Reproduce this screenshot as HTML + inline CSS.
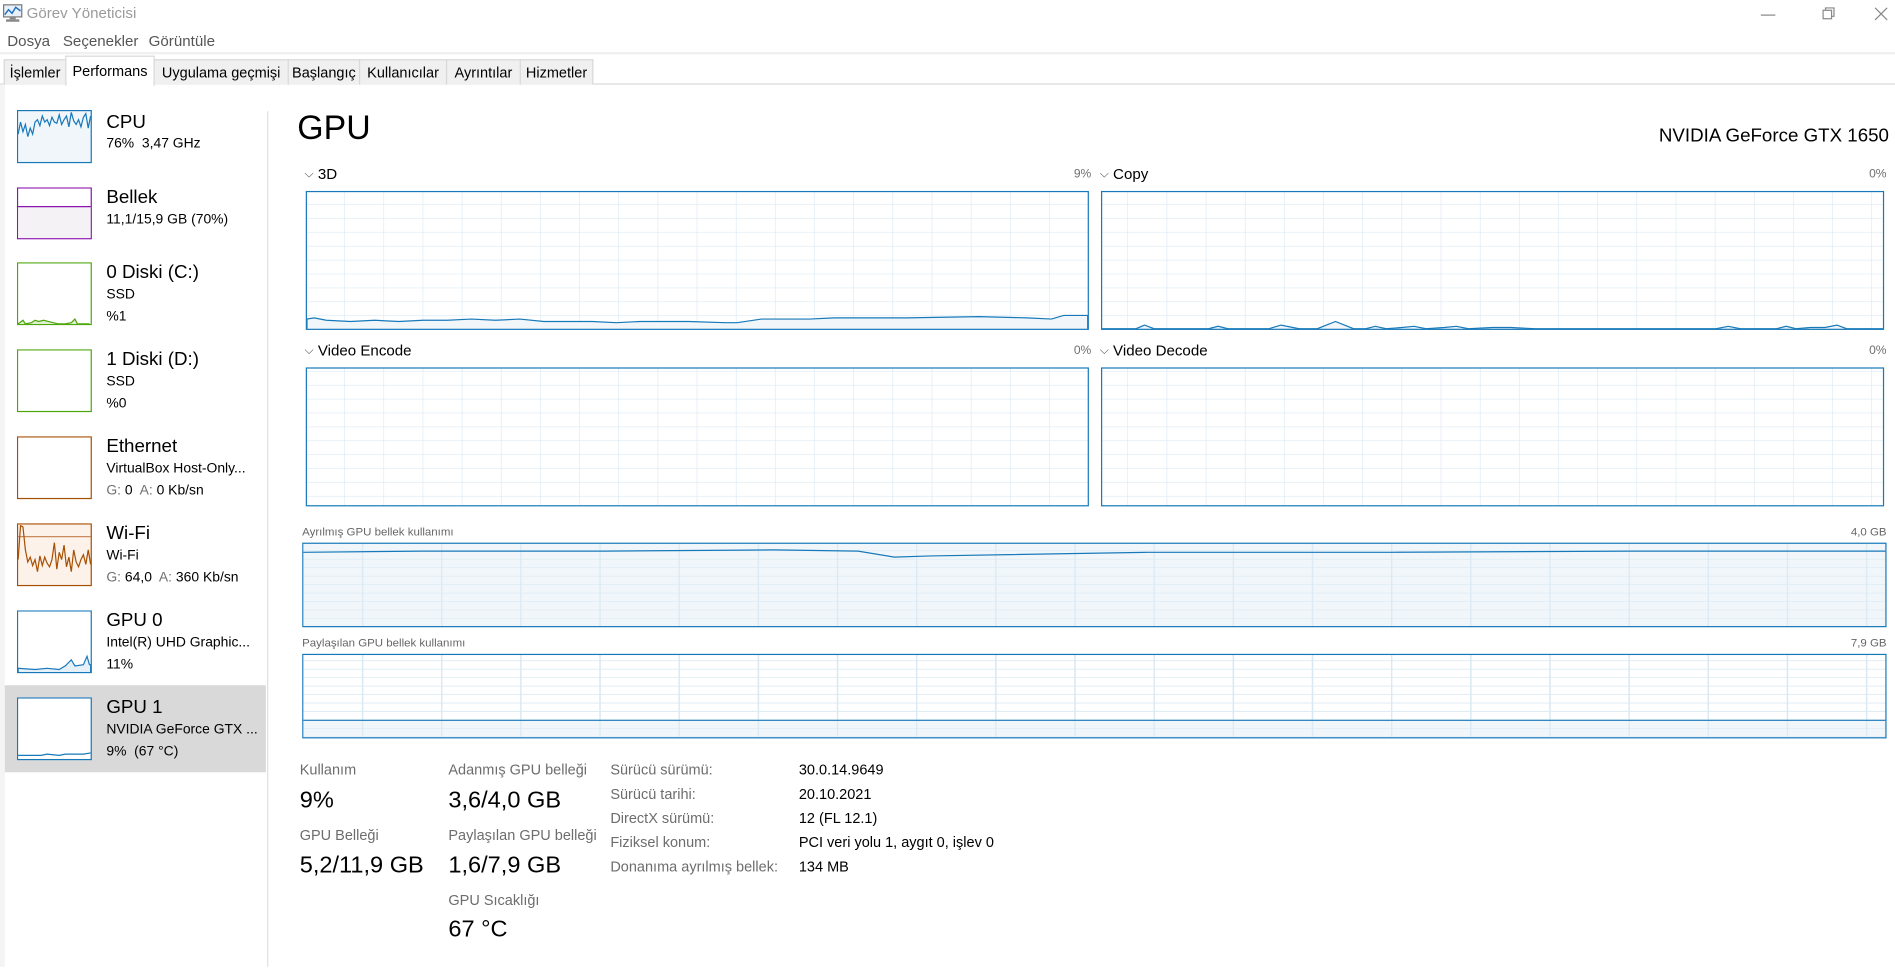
<!DOCTYPE html>
<html><head><meta charset="utf-8"><style>
html,body{margin:0;padding:0;width:1895px;height:966px;overflow:hidden;background:#fff}
#w{position:absolute;left:0;top:0;width:1568px;height:800px;transform:scale(1.20855);transform-origin:0 0;font-family:"Liberation Sans",sans-serif;color:#000}
.a{position:absolute;white-space:nowrap}
.tab{position:absolute;top:49px;height:20px;background:#f0f0f0;border:1px solid #d9d9d9;border-bottom:none;font-size:12px;line-height:21px;text-align:center;color:#000}
.th{position:absolute;left:15px;width:60px;height:47px;background:#fff}
.t1{position:absolute;left:88px;font-size:15.5px}
.t2{position:absolute;left:88px;font-size:11.5px;color:#000}
.g{color:#707070}
.lbl{font-size:12px;color:#6d6d6d}
.val{font-size:19.5px}
</style></head><body><div id="w">
<!-- title bar -->
<svg class="a" style="left:2px;top:3px" width="17" height="16" viewBox="0 0 17 16"><rect x="1" y="1" width="15" height="10" fill="#e8f1fa" stroke="#777"/><polyline points="2,9 5,5 8,8 11,3 15,6" fill="none" stroke="#1d6fbf" stroke-width="1.2"/><rect x="6" y="11" width="5" height="2" fill="#888"/><rect x="3" y="13" width="11" height="2" fill="#888"/></svg>
<div class="a" style="left:22px;top:4px;font-size:12.5px;color:#9a9a9a">Görev Yöneticisi</div>
<div class="a" style="left:1457px;top:12px;width:12px;height:1px;background:#888"></div>
<svg class="a" style="left:1508px;top:6px" width="11" height="11"><rect x="0.5" y="2.5" width="7" height="7" fill="#fff" stroke="#888"/><polyline points="2.5,2.5 2.5,0.5 9.5,0.5 9.5,7.5 7.5,7.5" fill="none" stroke="#888"/></svg>
<svg class="a" style="left:1551px;top:6px" width="11" height="11"><path d="M0.5 0.5L10.5 10.5M10.5 0.5L0.5 10.5" stroke="#888"/></svg>
<!-- menu -->
<div class="a" style="left:6px;top:27px;font-size:12.5px;color:#555">Dosya</div>
<div class="a" style="left:52px;top:27px;font-size:12.5px;color:#555">Seçenekler</div>
<div class="a" style="left:123px;top:27px;font-size:12.5px;color:#555">Görüntüle</div>
<div class="a" style="left:0;top:43px;width:1568px;height:2px;background:#f0f0f0"></div>
<!-- tabs -->
<div class="a" style="left:0;top:69px;width:1568px;height:1px;background:#d9d9d9"></div>
<div class="tab" style="left:3px;width:50px">İşlemler</div>
<div class="tab" style="left:54px;width:72px;top:46px;height:24px;background:#fff;line-height:24px">Performans</div>
<div class="tab" style="left:127px;width:110px">Uygulama geçmişi</div>
<div class="tab" style="left:238px;width:58px">Başlangıç</div>
<div class="tab" style="left:297px;width:71px">Kullanıcılar</div>
<div class="tab" style="left:369px;width:60px">Ayrıntılar</div>
<div class="tab" style="left:430px;width:59px">Hizmetler</div>
<div class="a" style="left:0;top:70px;width:4px;height:730px;background:#f4f4f4"></div>
<!-- sidebar -->
<div class="a" style="left:221px;top:92px;width:1px;height:708px;background:#e0e0e0"></div>
<div class="a" style="left:4px;top:567px;width:216px;height:72px;background:#d9d9d9"></div>

<svg class="a" style="left:14px;top:91px" width="63" height="45"><rect x="0.5" y="0.5" width="61" height="43" fill="#f1f6fa" stroke="#1779ba"/><polyline points="1,20 3,10 5,18 7,12 9,22 11,15 13,20 15,10 17,8 19,13 21,5 23,10 25,8 27,13 29,6 31,10 33,11 35,4 37,12 39,8 41,5 43,14 45,2 47,9 49,12 51,8 53,14 55,6 57,3 59,15 61,5" fill="none" stroke="#1779ba"/></svg>
<div class="t1" style="top:93px">CPU</div><div class="t2" style="top:113px">76%&nbsp; 3,47 GHz</div>

<svg class="a" style="left:14px;top:155px" width="63" height="44"><rect x="0.5" y="0.5" width="61" height="42" fill="#fff" stroke="#8b12ae"/><rect x="1" y="16" width="60" height="26" fill="#f4f2f4"/><line x1="1" y1="16" x2="61" y2="16" stroke="#8b12ae"/></svg>
<div class="t1" style="top:155px">Bellek</div><div class="t2" style="top:176px">11,1/15,9 GB (70%)</div>

<svg class="a" style="left:14px;top:217px" width="63" height="53"><rect x="0.5" y="0.5" width="61" height="51" fill="#fff" stroke="#4da60c"/><polyline points="1,51 5,48 7,51 12,50 15,48 18,49 22,48 26,49 30,50 34,51 40,51 45,50 48,47 50,51 60,51" fill="#dff0d0" stroke="#4da60c"/></svg>
<div class="t1" style="top:217px">0 Diski (C:)</div><div class="t2" style="top:238px">SSD</div><div class="t2" style="top:256px">%1</div>

<svg class="a" style="left:14px;top:289px" width="63" height="53"><rect x="0.5" y="0.5" width="61" height="51" fill="#fff" stroke="#4da60c"/></svg>
<div class="t1" style="top:289px">1 Diski (D:)</div><div class="t2" style="top:310px">SSD</div><div class="t2" style="top:328px">%0</div>

<svg class="a" style="left:14px;top:361px" width="63" height="53"><rect x="0.5" y="0.5" width="61" height="51" fill="#fff" stroke="#a74f01"/></svg>
<div class="t1" style="top:361px">Ethernet</div><div class="t2" style="top:382px">VirtualBox Host-Only...</div><div class="t2" style="top:400px"><span class="g">G:</span> 0&nbsp; <span class="g">A:</span> 0 Kb/sn</div>

<svg class="a" style="left:14px;top:433px" width="63" height="53"><rect x="0.5" y="0.5" width="61" height="51" fill="#fdf2ea" stroke="#a74f01"/><line x1="1" y1="11" x2="61" y2="11" stroke="#c98a5e"/><polyline points="1,30 3,2 5,3 7,22 9,32 11,28 13,35 15,30 17,40 19,27 21,35 23,28 25,33 27,36 29,30 31,16 33,38 35,24 37,30 39,18 41,36 43,28 45,40 47,22 49,32 51,36 53,30 55,26 57,34 59,22 61,34" fill="none" stroke="#a74f01"/></svg>
<div class="t1" style="top:433px">Wi-Fi</div><div class="t2" style="top:454px">Wi-Fi</div><div class="t2" style="top:472px"><span class="g">G:</span> 64,0&nbsp; <span class="g">A:</span> 360 Kb/sn</div>

<svg class="a" style="left:14px;top:505px" width="63" height="53"><rect x="0.5" y="0.5" width="61" height="51" fill="#fff" stroke="#1779ba"/><polyline points="1,51 1,48 15,49 25,48 35,49 40,46 45,41 48,46 55,45 58,38 60,45 61,45 61,51" fill="#e6f0f8" stroke="#1779ba"/></svg>
<div class="t1" style="top:505px">GPU 0</div><div class="t2" style="top:526px">Intel(R) UHD Graphic...</div><div class="t2" style="top:544px">11%</div>

<svg class="a" style="left:14px;top:577px" width="63" height="53"><rect x="0.5" y="0.5" width="61" height="51" fill="#fff" stroke="#1779ba"/><polyline points="1,48 20,48 25,47 35,48 40,47 55,47 61,46" fill="none" stroke="#1779ba"/></svg>
<div class="t1" style="top:577px">GPU 1</div><div class="t2" style="top:598px">NVIDIA GeForce GTX ...</div><div class="t2" style="top:616px">9%&nbsp; (67 °C)</div>

<!-- main -->
<div class="a" style="left:246px;top:90px;font-size:28px">GPU</div>
<div class="a" style="right:5px;top:104px;font-size:15.5px">NVIDIA GeForce GTX 1650</div>

<svg class="a" style="left:250px;top:130px" width="1315" height="680">
<defs>
<pattern id="gp" x="3" y="28" width="32.4" height="11.5" patternUnits="userSpaceOnUse"><path d="M32.4 0V11.5M0 11.5H32.4" fill="none" stroke="#d9e9f3" stroke-width="1"/></pattern>
<pattern id="mp" x="0" y="319" width="65.5" height="7" patternUnits="userSpaceOnUse"><path d="M50 0V7" fill="none" stroke="#d9e9f3"/><path d="M0 7H65.5" fill="none" stroke="#d9e9f3"/></pattern>
</defs>
<g font-family="Liberation Sans" font-size="12.5">
<text x="2" y="17" font-size="10" fill="#555">⌵</text><text x="13" y="18">3D</text><text x="653" y="17" font-size="10" fill="#707070" text-anchor="end">9%</text>
<text x="660" y="17" font-size="10" fill="#555">⌵</text><text x="671" y="18">Copy</text><text x="1311" y="17" font-size="10" fill="#707070" text-anchor="end">0%</text>
<text x="2" y="163" font-size="10" fill="#555">⌵</text><text x="13" y="164">Video Encode</text><text x="653" y="163" font-size="10" fill="#707070" text-anchor="end">0%</text>
<text x="660" y="163" font-size="10" fill="#555">⌵</text><text x="671" y="164">Video Decode</text><text x="1311" y="163" font-size="10" fill="#707070" text-anchor="end">0%</text>
<text x="0" y="313" font-size="9.5" fill="#666">Ayrılmış GPU bellek kullanımı</text><text x="1311" y="313" font-size="9.5" fill="#666" text-anchor="end">4,0 GB</text>
<text x="0" y="405" font-size="9.5" fill="#666">Paylaşılan GPU bellek kullanımı</text><text x="1311" y="405" font-size="9.5" fill="#666" text-anchor="end">7,9 GB</text>
</g>
<!-- 3D -->
<rect x="3.5" y="28.5" width="647" height="114" fill="url(#gp)"/>
<polyline points="4,142 4,134 10,133 20,135 40,136 60,135 80,136 100,135 120,135 140,134 160,135 180,134 200,136 240,136 260,137 280,136 320,136 350,137 360,137 380,134 420,134 440,133 500,133 560,132 600,133 620,134 630,131 650,131 650,142" fill="#f1f6fa" stroke="#1779ba"/>
<rect x="3.5" y="28.5" width="647" height="114" fill="none" stroke="#1779ba"/>
<!-- Copy -->
<rect x="661.5" y="28.5" width="647" height="114" fill="url(#gp)"/>
<polyline points="662,142 690,142 697,139 705,142 750,142 758,140 766,142 800,142 810,139 825,142 840,142 855,136 870,142 880,142 888,140 897,142 910,141 920,140 930,142 945,141 955,140 965,142 985,141 1000,141 1020,142 1170,142 1180,140 1190,142 1220,142 1228,140 1236,142 1248,141 1260,141 1270,139 1278,142 1308,142" fill="#f1f6fa" stroke="#1779ba"/>
<rect x="661.5" y="28.5" width="647" height="114" fill="none" stroke="#1779ba"/>
<!-- Encode / Decode -->
<rect x="3.5" y="174.5" width="647" height="114" fill="url(#gp)" transform="translate(0,0)"/>
<rect x="3.5" y="174.5" width="647" height="114" fill="none" stroke="#1779ba"/>
<rect x="661.5" y="174.5" width="647" height="114" fill="url(#gp)"/>
<rect x="661.5" y="174.5" width="647" height="114" fill="none" stroke="#1779ba"/>
<!-- dedicated -->
<rect x="0.5" y="319.5" width="1310" height="69" fill="#f1f6fa"/>
<rect x="0.5" y="319.5" width="1310" height="69" fill="url(#mp)"/>
<polyline points="1,327 100,326 250,326 390,325 460,326 490,331 520,330 700,327 900,327 1100,326 1240,326 1310,326" fill="none" stroke="#1779ba"/>
<rect x="0.5" y="319.5" width="1310" height="69" fill="none" stroke="#1779ba"/>
<!-- shared -->
<rect x="0.5" y="411.5" width="1310" height="69" fill="url(#mp)"/>
<rect x="1" y="466" width="1309" height="14" fill="#f1f6fa"/>
<rect x="0.5" y="411.5" width="1310" height="69" fill="url(#mp)"/>
<line x1="1" y1="466" x2="1310" y2="466" stroke="#1779ba"/>
<rect x="0.5" y="411.5" width="1310" height="69" fill="none" stroke="#1779ba"/>
</svg>

<!-- stats -->
<div class="a lbl" style="left:248px;top:630px">Kullanım</div>
<div class="a val" style="left:248px;top:651px">9%</div>
<div class="a lbl" style="left:248px;top:684px">GPU Belleği</div>
<div class="a val" style="left:248px;top:705px">5,2/11,9 GB</div>
<div class="a lbl" style="left:371px;top:630px">Adanmış GPU belleği</div>
<div class="a val" style="left:371px;top:651px">3,6/4,0 GB</div>
<div class="a lbl" style="left:371px;top:684px">Paylaşılan GPU belleği</div>
<div class="a val" style="left:371px;top:705px">1,6/7,9 GB</div>
<div class="a lbl" style="left:371px;top:738px">GPU Sıcaklığı</div>
<div class="a val" style="left:371px;top:758px">67 °C</div>
<div class="a lbl" style="left:505px;top:630px">Sürücü sürümü:</div><div class="a" style="left:661px;top:630px;font-size:12px">30.0.14.9649</div>
<div class="a lbl" style="left:505px;top:650px">Sürücü tarihi:</div><div class="a" style="left:661px;top:650px;font-size:12px">20.10.2021</div>
<div class="a lbl" style="left:505px;top:670px">DirectX sürümü:</div><div class="a" style="left:661px;top:670px;font-size:12px">12 (FL 12.1)</div>
<div class="a lbl" style="left:505px;top:690px">Fiziksel konum:</div><div class="a" style="left:661px;top:690px;font-size:12px">PCI veri yolu 1, aygıt 0, işlev 0</div>
<div class="a lbl" style="left:505px;top:710px">Donanıma ayrılmış bellek:</div><div class="a" style="left:661px;top:710px;font-size:12px">134 MB</div>
</div></body></html>
